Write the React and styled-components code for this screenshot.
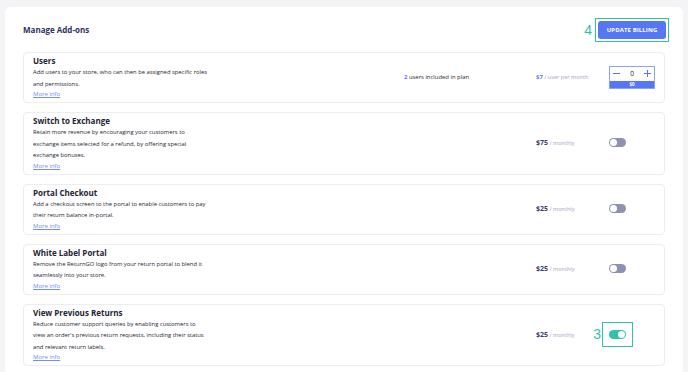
import React, { useState } from "react";
import styled, { createGlobalStyle } from "styled-components";

const GlobalStyle = createGlobalStyle`
  body {
    margin: 0;
    background: #f4f4f6;
    font-family: "Open Sans", "Liberation Sans", sans-serif;
  }
`;

const Page = styled.div`
  padding: 7px 5px 0;
`;

const Panel = styled.div`
  background: #fff;
  border-radius: 6px 6px 0 0;
  padding: 10px 18px 20px;
`;

const Header = styled.div`
  display: flex;
  align-items: center;
  justify-content: space-between;
  height: 25px;
  margin: 0 -4px 10px 0;
`;

const Title = styled.h2`
  margin: 0;
  font-size: 8px;
  font-weight: 700;
  color: #2e3163;
`;

const Marker = styled.div`
  display: flex;
  align-items: center;
  gap: 3px;
`;

const StepNum = styled.span`
  font-family: "Liberation Sans", sans-serif;
  font-size: 14px;
  line-height: 1;
  color: #2ec4a5;
`;

const Highlight = styled.div`
  border: 1.5px solid #2ec4a5;
  padding: 2px;
`;

const BillingButton = styled.button`
  display: block;
  width: 68px;
  height: 18px;
  border: none;
  border-radius: 3px;
  background: #5577f2;
  color: #fff;
  font-family: inherit;
  font-size: 6px;
  font-weight: 700;
  letter-spacing: 0.1px;
  cursor: pointer;
`;

const List = styled.div`
  display: flex;
  flex-direction: column;
  gap: 9px;
`;

const Card = styled.div`
  display: flex;
  align-items: center;
  border: 1px solid #ececf2;
  border-radius: 4px;
  padding: 2px 9px 3px;
`;

const Info = styled.div`
  flex: 1;
  line-height: 0;
`;

const Name = styled.div`
  font-size: 8px;
  font-weight: 700;
  line-height: 12px;
  color: #222235;
`;

const Desc = styled.p`
  margin: 0;
  font-size: 5.85px;
  line-height: 11.5px;
  color: #26262f;
`;

const More = styled.a`
  display: block;
  width: fit-content;
  font-size: 6px;
  line-height: 9px;
  color: #6f8ff5;
  text-decoration: underline;
`;

const Included = styled.div`
  width: 132px;
  font-size: 5.9px;
  color: #26262f;

  b {
    color: #5577f2;
    font-weight: 700;
  }
`;

const Price = styled.div`
  width: 73px;
  font-size: 5.6px;
  color: #a3a5bf;

  b {
    font-size: ${(p) => (p.$small ? "6px" : "7px")};
    font-weight: 700;
    color: ${(p) => (p.$accent ? "#5577f2" : "#3b3e6c")};
  }
`;

const Control = styled.div`
  width: 46px;
  display: flex;
`;

const Counter = styled.div`
  width: 44px;
  border: 1px solid #8aa3f6;
`;

const CounterRow = styled.div`
  height: 14px;
  display: flex;
  align-items: center;
  justify-content: space-between;
  padding: 0 3px;
`;

const StepBtn = styled.button`
  border: 0;
  background: none;
  padding: 0;
  display: flex;
  cursor: pointer;
`;

const Count = styled.span`
  font-size: 6.5px;
  color: #222;
`;

const CounterTotal = styled.div`
  height: 7px;
  background: #5577f2;
  color: #fff;
  font-size: 4.5px;
  font-weight: 700;
  line-height: 7px;
  text-align: center;
`;

const ToggleSpot = styled.div`
  position: relative;
`;

const Toggle = styled.button`
  position: relative;
  display: block;
  width: 17px;
  height: 9px;
  border: 0;
  padding: 0;
  border-radius: 5px;
  background: ${(p) => (p.$on ? "#2ec4a5" : "#8f91b4")};
  cursor: pointer;

  &::after {
    content: "";
    position: absolute;
    top: 1px;
    left: ${(p) => (p.$on ? "9px" : "1px")};
    width: 7px;
    height: 7px;
    border-radius: 50%;
    background: #fff;
  }
`;

const ToggleMark = styled.div`
  position: absolute;
  top: -8px;
  bottom: -8px;
  left: -7px;
  right: -7px;
  border: 1.5px solid #2ec4a5;
  pointer-events: none;

  span {
    position: absolute;
    right: calc(100% + 2px);
    top: 50%;
    transform: translateY(-50%);
  }
`;

const MinusIcon = () => (
  <svg width="7" height="7" viewBox="0 0 7 7">
    <path d="M0 3.5h7" stroke="#5577f2" strokeWidth="1" />
  </svg>
);

const PlusIcon = () => (
  <svg width="7" height="7" viewBox="0 0 7 7">
    <path d="M0 3.5h7M3.5 0v7" stroke="#5577f2" strokeWidth="1" />
  </svg>
);

const addons = [
  {
    name: "Switch to Exchange",
    lines: [
      "Retain more revenue by encouraging your customers to",
      "exchange items selected for a refund, by offering special",
      "exchange bonuses.",
    ],
    price: "$75",
    on: false,
  },
  {
    name: "Portal Checkout",
    lines: [
      "Add a checkout screen to the portal to enable customers to pay",
      "their return balance in-portal.",
    ],
    price: "$25",
    on: false,
  },
  {
    name: "White Label Portal",
    lines: [
      "Remove the ReturnGO logo from your return portal to blend it",
      "seamlessly into your store.",
    ],
    price: "$25",
    on: false,
  },
  {
    name: "View Previous Returns",
    lines: [
      "Reduce customer support queries by enabling customers to",
      "view an order's previous return requests, including their status",
      "and relevant return labels.",
    ],
    price: "$25",
    on: true,
    step: 3,
  },
];

const Lines = ({ lines }) => (
  <Desc>
    {lines.map((l, i) => (
      <React.Fragment key={i}>
        {l}
        {i < lines.length - 1 && <br />}
      </React.Fragment>
    ))}
  </Desc>
);

const App = () => {
  const [users, setUsers] = useState(0);
  const [enabled, setEnabled] = useState(addons.map((a) => a.on));

  const flip = (i) => {
    setEnabled(enabled.map((v, j) => (j === i ? !v : v)));
  };

  return (
    <Page>
      <GlobalStyle />
      <Panel>
        <Header>
          <Title>Manage Add-ons</Title>
          <Marker>
            <StepNum>4</StepNum>
            <Highlight>
              <BillingButton>UPDATE BILLING</BillingButton>
            </Highlight>
          </Marker>
        </Header>

        <List>
          <Card>
            <Info>
              <Name>Users</Name>
              <Lines
                lines={[
                  "Add users to your store, who can then be assigned specific roles",
                  "and permissions.",
                ]}
              />
              <More href="#">More info</More>
            </Info>
            <Included>
              <b>2</b> users included in plan
            </Included>
            <Price $accent $small>
              <b>$7</b> / user per month
            </Price>
            <Control>
              <Counter>
                <CounterRow>
                  <StepBtn onClick={() => setUsers(Math.max(0, users - 1))}>
                    <MinusIcon />
                  </StepBtn>
                  <Count>{users}</Count>
                  <StepBtn onClick={() => setUsers(users + 1)}>
                    <PlusIcon />
                  </StepBtn>
                </CounterRow>
                <CounterTotal>${users * 7}</CounterTotal>
              </Counter>
            </Control>
          </Card>

          {addons.map((a, i) => (
            <Card key={a.name}>
              <Info>
                <Name>{a.name}</Name>
                <Lines lines={a.lines} />
                <More href="#">More info</More>
              </Info>
              <Price>
                <b>{a.price}</b> / monthly
              </Price>
              <Control>
                <ToggleSpot>
                  <Toggle $on={enabled[i]} onClick={() => flip(i)} />
                  {a.step && (
                    <ToggleMark>
                      <StepNum as="span">{a.step}</StepNum>
                    </ToggleMark>
                  )}
                </ToggleSpot>
              </Control>
            </Card>
          ))}
        </List>
      </Panel>
    </Page>
  );
};

export default App;
